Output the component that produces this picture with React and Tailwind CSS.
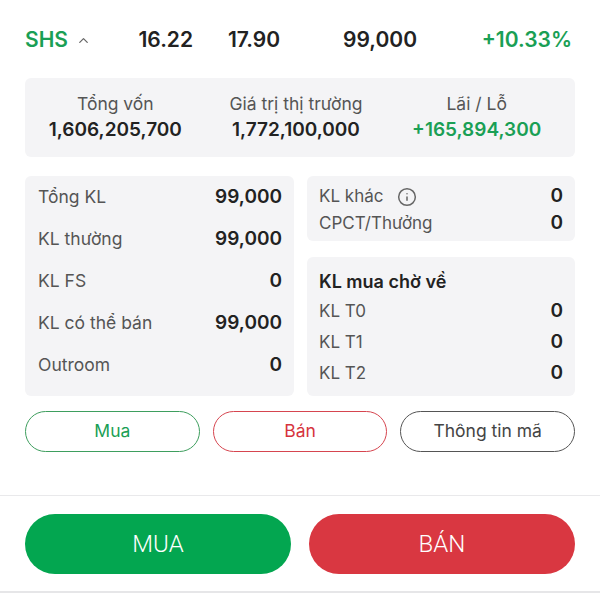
import React from 'react';
import { ChevronUp, Info } from 'lucide-react';

const leftRows = [
  ['Tổng KL', '99,000'],
  ['KL thường', '99,000'],
  ['KL FS', '0'],
  ['KL có thể bán', '99,000'],
  ['Outroom', '0'],
];

const pendingRows = [
  ['KL T0', '0'],
  ['KL T1', '0'],
  ['KL T2', '0'],
];

const App = () => {
  return (
    <div className="w-[600px] h-[600px] bg-white overflow-hidden text-[#222] font-['Inter','Noto_Sans',sans-serif]">
      <div className="px-[25px]">
        {/* Header row */}
        <div className="flex items-center h-[40px] mt-[20px] text-[21px] font-semibold">
          <div className="w-[110px] flex items-center gap-[8px] text-[#1a9f55]">
            <span>SHS</span>
            <ChevronUp className="w-[15px] h-[15px] text-[#666]" strokeWidth={2} />
          </div>
          <div className="w-[58px] text-right">16.22</div>
          <div className="w-[87px] text-right">17.90</div>
          <div className="w-[137px] text-right">99,000</div>
          <div className="flex-1 text-right text-[#1a9f55] pr-[3px]">+10.33%</div>
        </div>

        {/* Summary */}
        <div className="mt-[18px] h-[79px] bg-[#f4f4f6] rounded-[6px] grid grid-cols-3 items-center pr-[8px]">
          <div className="flex flex-col items-center">
            <span className="text-[17.5px] leading-[24px] text-[#555]">Tổng vốn</span>
            <span className="text-[19px] font-semibold leading-[28px]">1,606,205,700</span>
          </div>
          <div className="flex flex-col items-center">
            <span className="text-[17.5px] leading-[24px] text-[#555]">Giá trị thị trường</span>
            <span className="text-[19px] font-semibold leading-[28px]">1,772,100,000</span>
          </div>
          <div className="flex flex-col items-center">
            <span className="text-[17.5px] leading-[24px] text-[#555]">Lãi / Lỗ</span>
            <span className="text-[19px] font-semibold leading-[28px] text-[#1a9f55]">+165,894,300</span>
          </div>
        </div>

        {/* Detail cards */}
        <div className="mt-[19px] flex gap-[13px]">
          <div className="w-[269px] bg-[#f4f4f6] rounded-[6px] pl-[13px] pr-[12px] pb-[10px]">
            {leftRows.map(([label, value]) => (
              <div key={label} className="h-[42px] flex items-center justify-between">
                <span className="text-[17.5px] text-[#555]">{label}</span>
                <span className="text-[19px] font-semibold">{value}</span>
              </div>
            ))}
          </div>
          <div className="flex-1 flex flex-col gap-[16px]">
            <div className="bg-[#f4f4f6] rounded-[6px] pl-[12px] pr-[12px] pt-[7px] pb-[4px] text-[17px]">
              <div className="h-[27px] flex items-center justify-between">
                <span className="flex items-center gap-[14px] text-[#555]">
                  KL khác
                  <Info className="w-[20px] h-[20px] text-[#666]" strokeWidth={1.8} />
                </span>
                <span className="text-[19px] font-semibold">0</span>
              </div>
              <div className="h-[27px] flex items-center justify-between">
                <span className="text-[#555]">CPCT/Thưởng</span>
                <span className="text-[19px] font-semibold">0</span>
              </div>
            </div>
            <div className="bg-[#f4f4f6] rounded-[6px] pl-[12px] pr-[12px] pt-[9px] pb-[7px] text-[17px]">
              <div className="h-[30px] flex items-center text-[18px] font-semibold">KL mua chờ về</div>
              {pendingRows.map(([label, value]) => (
                <div key={label} className="h-[31px] flex items-center justify-between">
                  <span className="text-[#555]">{label}</span>
                  <span className="text-[19px] font-semibold">{value}</span>
                </div>
              ))}
            </div>
          </div>
        </div>

        {/* Outline buttons */}
        <div className="mt-[15px] flex gap-[13px] text-[17.5px]">
          <button className="flex-1 h-[41px] rounded-full border-[1.5px] border-[#3e9e5e] text-[#1a9f55]">Mua</button>
          <button className="flex-1 h-[41px] rounded-full border-[1.5px] border-[#d6454f] text-[#d6333d]">Bán</button>
          <button className="flex-1 h-[41px] rounded-full border-[1.5px] border-[#555] text-[#444]">Thông tin mã</button>
        </div>
      </div>

      <div className="mt-[43px] h-[1px] bg-[#e9e9eb]" />

      <div className="px-[25px] mt-[18px] flex gap-[18px]">
        <button className="flex-1 h-[60px] rounded-full bg-[#03a650] text-white text-[24px] font-['Roboto',sans-serif] font-light">MUA</button>
        <button className="flex-1 h-[60px] rounded-full bg-[#d93741] text-white text-[24px] font-['Roboto',sans-serif] font-light">BÁN</button>
      </div>

      <div className="mt-[17px] h-[2px] bg-[#e6e6e8]" />
    </div>
  );
};

export default App;
